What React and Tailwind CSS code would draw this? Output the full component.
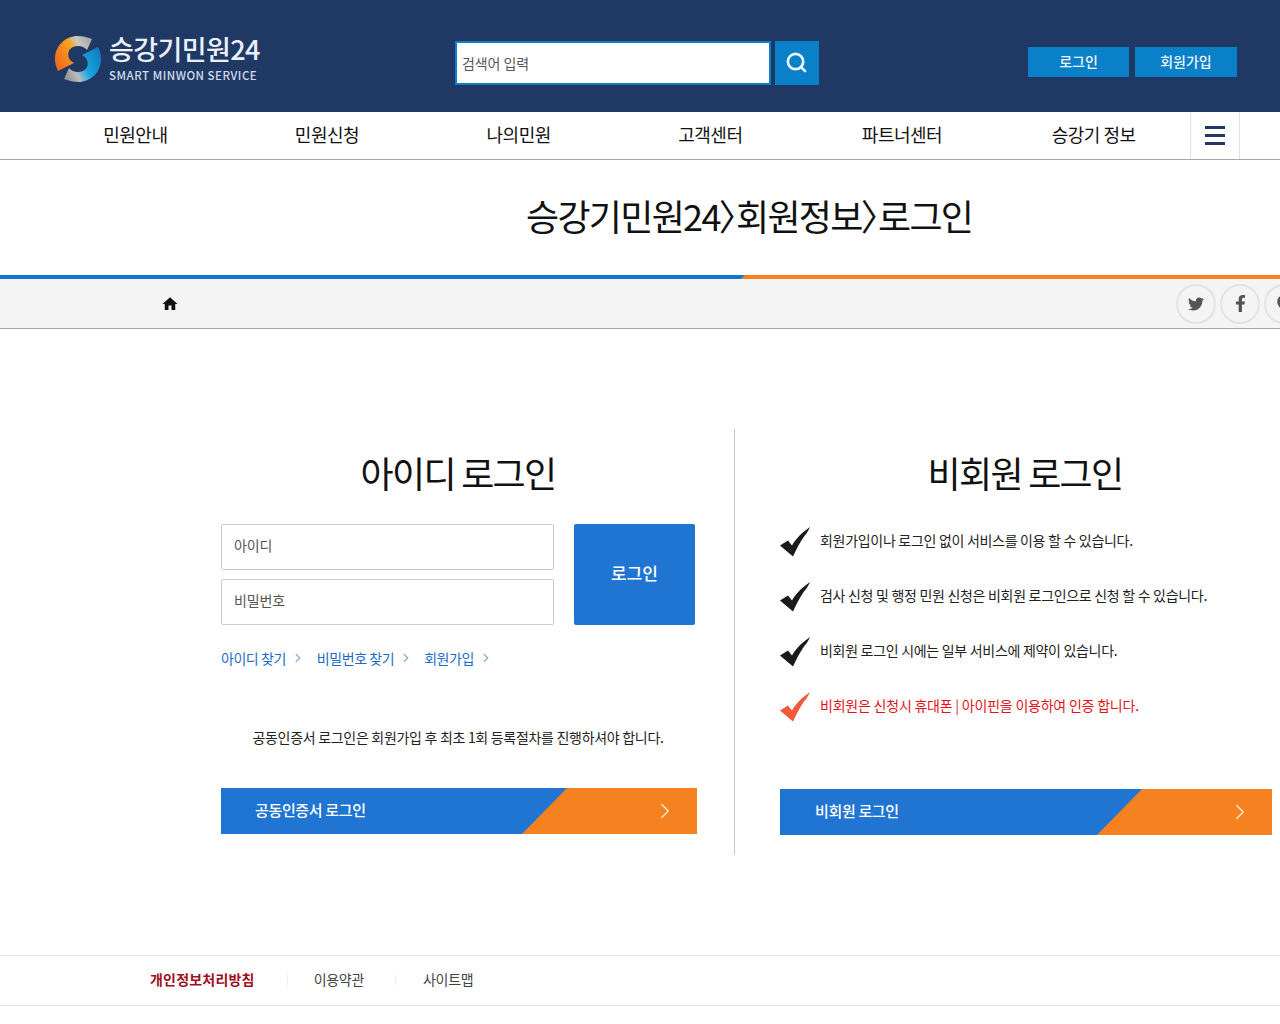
import { Search, ChevronRight } from 'lucide-react'
import { FaTwitter, FaFacebookF, FaMapMarkerAlt } from 'react-icons/fa'
import { MdHome } from 'react-icons/md'

const font = 'font-["Noto_Sans_CJK_KR","Noto_Sans",sans-serif]'

const Logo = () => (
  <svg width="46" height="46" viewBox="0 0 46 46" className="shrink-0">
    <defs>
      <linearGradient id="logoTop" x1="0" y1="0.7" x2="1" y2="0.2">
        <stop offset="0" stopColor="#f2691f" />
        <stop offset="0.5" stopColor="#f9a11b" />
        <stop offset="0.7" stopColor="#c9c9c5" />
        <stop offset="1" stopColor="#a8a8a6" />
      </linearGradient>
      <linearGradient id="logoBottom" x1="0" y1="0.7" x2="1" y2="0.2">
        <stop offset="0" stopColor="#0f7fc4" />
        <stop offset="0.45" stopColor="#18a6df" />
        <stop offset="0.72" stopColor="#b9bcbd" />
        <stop offset="1" stopColor="#8f9192" />
      </linearGradient>
    </defs>
    <path d="M37 3C32 1 27 0 23 0C10 0 0 10 0 23C0 27 1 31 3 35L19 27C12 24 11 14 18 11C24 8.5 30 11 32 14Z" fill="url(#logoTop)" />
    <path d="M37 3C32 1 27 0 23 0C10 0 0 10 0 23C0 27 1 31 3 35L19 27C12 24 11 14 18 11C24 8.5 30 11 32 14Z" fill="url(#logoBottom)" transform="rotate(180 23 23)" />
  </svg>
)

const Check = ({ color }) => (
  <svg width="30" height="30" viewBox="0 0 30 30" className="mt-[4px] shrink-0">
    <path d="M0 18.5L8 13.5L12 18.5C16 11 23 5 30 0C27.5 6 25 8 23 11C19 17 16 23 13 29.5Z" fill={color} />
  </svg>
)

const navItems = ['민원안내', '민원신청', '나의민원', '고객센터', '파트너센터', '승강기 정보']

const notices = [
  '회원가입이나 로그인 없이 서비스를 이용 할 수 있습니다.',
  '검사 신청 및 행정 민원 신청은 비회원 로그인으로 신청 할 수 있습니다.',
  '비회원 로그인 시에는 일부 서비스에 제약이 있습니다.',
]

const Banner = ({ label, pad }) => (
  <a className={`relative flex h-[46px] items-center bg-[#2075d3] pb-[2px] text-[15px] font-medium tracking-[-0.35px] text-white ${pad}`}>
    {label}
    <span className="absolute right-0 top-0 flex h-full w-[175px] items-center justify-end bg-[#f68121] pr-[19px] [clip-path:polygon(45px_0,100%_0,100%_100%,0_100%)]">
      <ChevronRight size={26} strokeWidth={1.5} className="text-[#fde3c6]" />
    </span>
  </a>
)

export default function App() {
  return (
    <div className={`min-h-[1024px] overflow-hidden bg-white ${font}`}>
      <header className="flex h-[112px] items-start bg-[#1f3864] pl-[55px]">
        <div className="mt-[36px] flex w-[400px] items-start gap-[8px]">
          <Logo />
          <div className="-mt-[3px] text-white">
            <div className="text-[27px] font-medium leading-[32px] tracking-[-0.6px] text-[#e9f0f8]">승강기민원24</div>
            <div className="mt-[2px] text-[11.5px] font-medium leading-[16px] tracking-[0.5px] text-[#cfdcec]">SMART MINWON SERVICE</div>
          </div>
        </div>
        <div className="mt-[41px] flex items-center gap-[4px]">
          <div className="flex h-[44px] w-[316px] items-center border-[2px] border-[#0a80c8] bg-white pl-[5px] text-[14px] tracking-[-0.1px] text-[#555555]">
            검색어 입력
          </div>
          <button className="flex h-[44px] w-[44px] items-center justify-center bg-[#0a80c8] pb-[2px] pr-[2px] text-[#e8f6fd]">
            <Search size={23} strokeWidth={2.8} />
          </button>
        </div>
        <div className="ml-[209px] mt-[47px] flex gap-[6px] text-[14px] font-medium text-[#eef7fd]">
          <a className="flex h-[30px] w-[101px] items-center justify-center bg-[#0a80c8] pb-[1px]">로그인</a>
          <a className="flex h-[30px] w-[102px] items-center justify-center bg-[#0a80c8] pb-[1px]">회원가입</a>
        </div>
      </header>

      <nav className="flex h-[48px] items-stretch border-b border-[#a8a8a8] pl-[40px]">
        <div className="grid w-[1150px] grid-cols-6">
          {navItems.map((item) => (
            <a key={item} className="flex items-center justify-center pb-[2px] pr-[1px] text-[18px] tracking-[-0.5px] text-[#111111]">
              {item}
            </a>
          ))}
        </div>
        <button className="flex w-[50px] flex-col items-center justify-center gap-[5px] border-x border-[#dde1e8]">
          <span className="h-[3px] w-[20px] bg-[#1f3864]" />
          <span className="h-[3px] w-[20px] bg-[#1f3864]" />
          <span className="h-[3px] w-[20px] bg-[#1f3864]" />
        </button>
      </nav>

      <h1 className="flex h-[115px] items-center pb-[5px] pl-[526px] text-[36px] font-normal tracking-[-1.7px] text-[#111111]">
        승강기민원24<span className="[font-feature-settings:'palt']">〉</span>회원정보<span className="[font-feature-settings:'palt']">〉</span>로그인
      </h1>

      <div className="flex h-[4px]">
        <div className="w-[745px] bg-[#1279c9]" />
        <div className="-ml-[4px] flex-1 bg-[#f68121] [clip-path:polygon(4px_0,100%_0,100%_100%,0_100%)]" />
      </div>

      <div className="flex h-[50px] items-center overflow-hidden border-b border-[#a8a8a8] bg-[#f4f4f4] pl-[161px]">
        <MdHome size={18} className="text-[#111111]" />
        <div className="ml-auto mr-[-24px] flex gap-[4px] text-[#555555]">
          <a className="flex h-[40px] w-[40px] items-center justify-center rounded-full border-2 border-[#e2e2e2]"><FaTwitter size={16} /></a>
          <a className="flex h-[40px] w-[40px] items-center justify-center rounded-full border-2 border-[#e2e2e2]"><FaFacebookF size={17} /></a>
          <a className="flex h-[40px] w-[40px] items-center justify-center rounded-full border-2 border-[#e2e2e2]"><FaMapMarkerAlt size={18} /></a>
        </div>
      </div>

      <main className="flex h-[626px] pt-[100px] pb-[100px]">
        <section className="ml-[221px] w-[514px] border-r border-[#c8c8c8]">
          <div className="w-[476px]">
            <h2 className="mb-[27px] mt-[18px] pr-[2px] text-center text-[36px] font-normal leading-[50px] tracking-[-1.7px] text-[#111111]">아이디 로그인</h2>
            <div className="flex gap-[20px]">
              <div className="flex w-[333px] flex-col gap-[9px]">
                <div className="flex h-[46px] items-center rounded-[2px] border border-[#cccccc] pb-[3px] pl-[12px] text-[14px] tracking-[-0.1px] text-[#555555]">아이디</div>
                <div className="flex h-[46px] items-center rounded-[2px] border border-[#cccccc] pb-[3px] pl-[12px] text-[14px] tracking-[-0.1px] text-[#555555]">비밀번호</div>
              </div>
              <button className="flex h-[101px] w-[121px] items-center justify-center rounded-[2px] bg-[#2075d3] pb-[4px] text-[17px] font-medium text-white">로그인</button>
            </div>
            <div className="mt-[23px] flex items-center text-[14px] leading-[20px] tracking-[-0.45px] text-[#1c6cc6]">
              <a className="flex items-center">아이디 찾기<ChevronRight size={14} strokeWidth={2.5} className="ml-[5px] text-[#8fb2dc]" /></a>
              <a className="ml-[12px] flex items-center">비밀번호 찾기<ChevronRight size={14} strokeWidth={2.5} className="ml-[5px] text-[#8fb2dc]" /></a>
              <a className="ml-[11px] flex items-center">회원가입<ChevronRight size={14} strokeWidth={2.5} className="ml-[5px] text-[#8fb2dc]" /></a>
            </div>
            <p className="mt-[59px] pr-[2px] text-center text-[14px] leading-[20px] tracking-[-0.3px] text-[#222222]">
              공동인증서 로그인은 회원가입 후 최초 1회 등록절차를 진행하셔야 합니다.
            </p>
            <div className="mt-[41px]">
              <Banner label="공동인증서 로그인" pad="pl-[34px]" />
            </div>
          </div>
        </section>

        <section className="ml-[45px] w-[492px]">
          <h2 className="mb-[28px] mt-[18px] pr-[2px] text-center text-[36px] font-normal leading-[50px] tracking-[-1.7px] text-[#111111]">비회원 로그인</h2>
          <ul className="flex flex-col gap-[25px] text-[14px] leading-[20px] tracking-[-0.3px] text-[#222222]">
            {notices.map((text) => (
              <li key={text} className="flex h-[30px] items-center gap-[10px]">
                <Check color="#1a1a1a" />
                {text}
              </li>
            ))}
            <li className="flex h-[30px] items-center gap-[10px] tracking-[-0.22px] text-[#e3131b]">
              <Check color="#f0593a" />
              비회원은 신청시 휴대폰 | 아이핀을 이용하여 인증 합니다.
            </li>
          </ul>
          <div className="mt-[69px]">
            <Banner label="비회원 로그인" pad="pl-[35px]" />
          </div>
        </section>
      </main>

      <footer className="flex h-[51px] items-center border-y border-[#e6e6e6] pb-[2px] pl-[150px] text-[14px] tracking-[-0.3px] text-[#444444]">
        <a className="font-bold tracking-[0.2px] text-[#a01022]">개인정보처리방침</a>
        <span className="ml-[32px] mr-[26px] h-[12px] w-px bg-[#eeeeee]" />
        <a>이용약관</a>
        <span className="ml-[31px] mr-[27px] h-[12px] w-px bg-[#eeeeee]" />
        <a>사이트맵</a>
      </footer>
    </div>
  )
}
